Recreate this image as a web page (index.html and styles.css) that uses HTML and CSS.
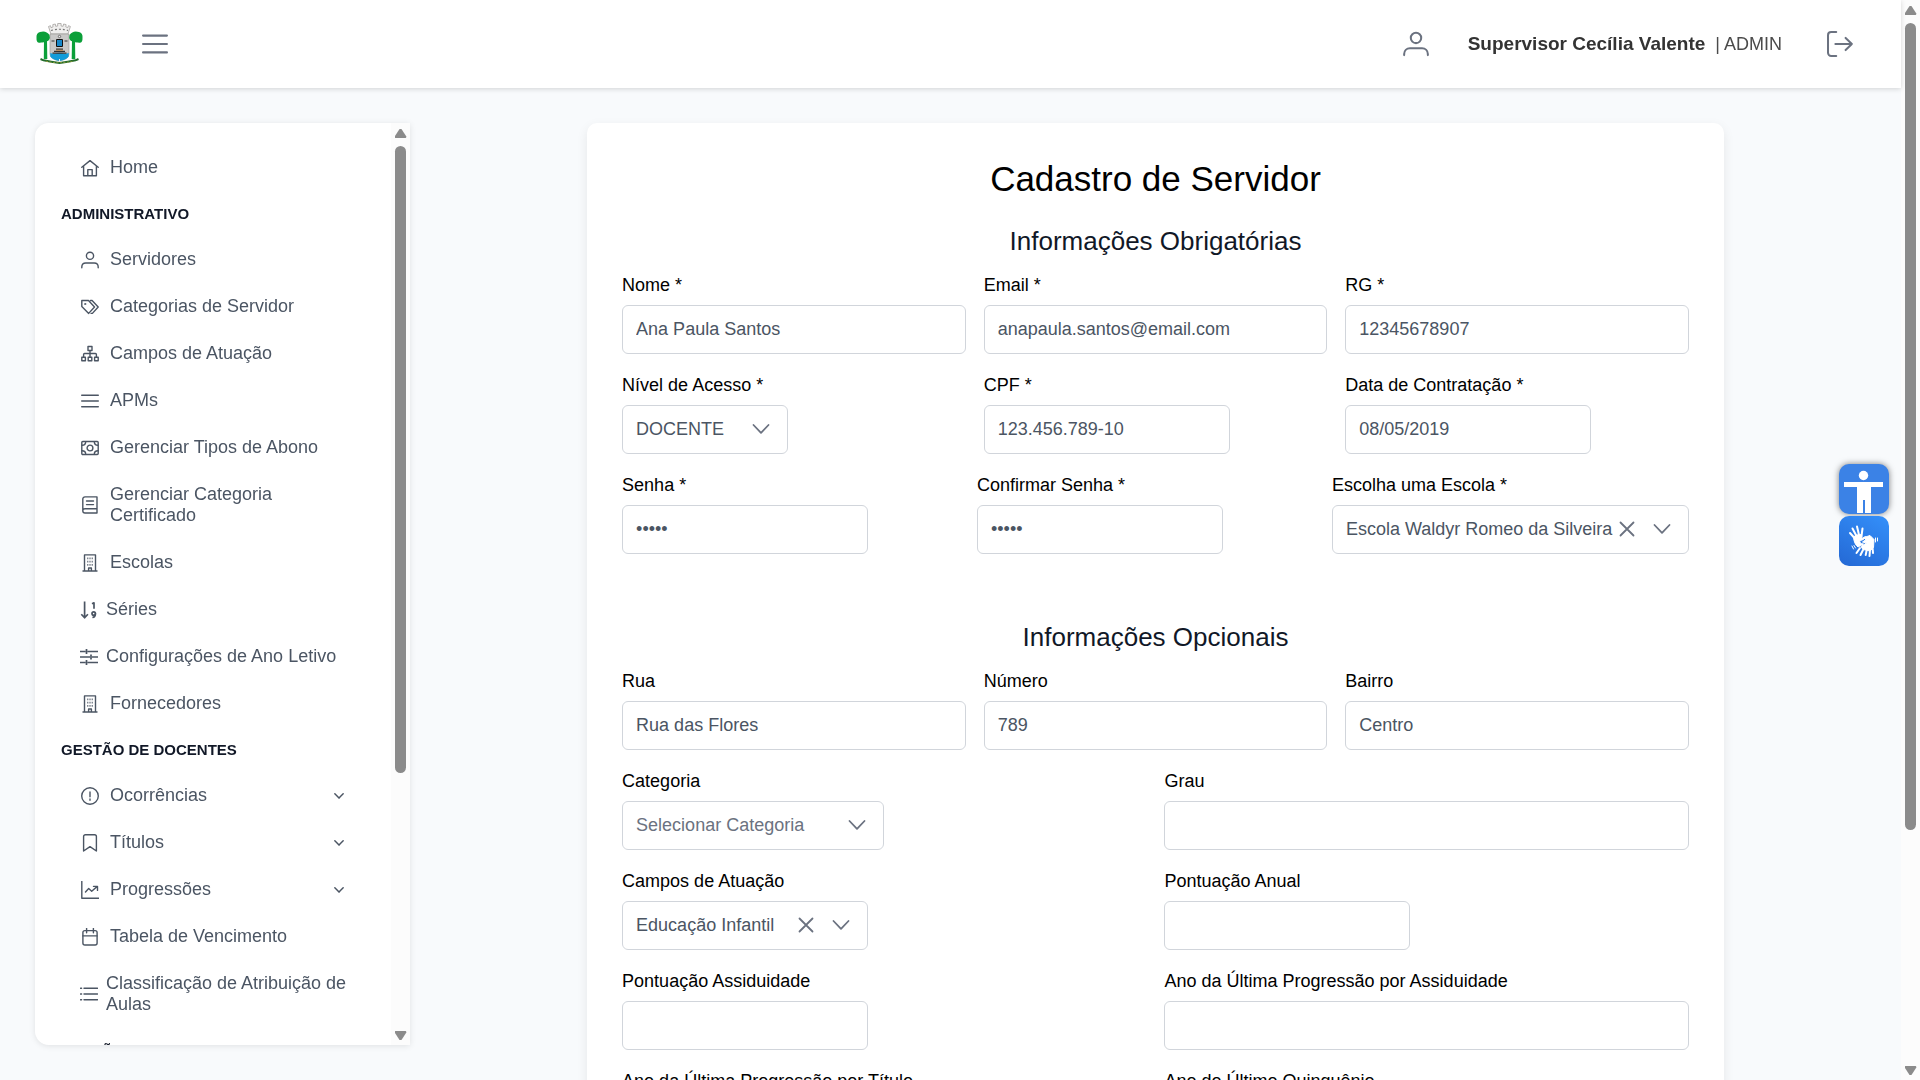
FILE: index.html
```html
<!DOCTYPE html>
<html lang="pt-BR">
<head>
<meta charset="utf-8">
<meta name="viewport" content="width=device-width, initial-scale=1">
<title>Cadastro de Servidor</title>
<link rel="stylesheet" href="styles.css">
</head>
<body>
<svg class="sprite" aria-hidden="true">
  <symbol id="i-home" viewBox="0 0 18 18"><path d="M.8 8.300 9 1.600l8.200 6.700M2.600 7v9.800h12.800V7M6.800 16.600v-6h4.400v6"/></symbol>
  <symbol id="i-user" viewBox="0 0 18 18"><circle cx="9" cy="4.800" r="3.600"/><path d="M.8 16.700v-.7c0-2.300 1.700-4 4-4h8.400c2.300 0 4 1.700 4 4v.7"/></symbol>
  <symbol id="i-tags" viewBox="0 0 18 18"><path d="M.8 2.500h6.700l6 6.500-5.800 6.400L.8 8.500zM9.500 2.500h1.600L17.200 9l-5.800 6.400h-1.300"/><circle cx="4.300" cy="6" r=".4"/></symbol>
  <symbol id="i-sitemap" viewBox="0 0 18 18"><path d="M7 1.500h4v4H7zM.8 12.200h3.600v3.600H.8zM7.200 12.200h3.600v3.600H7.200zM13.600 12.200h3.600v3.600h-3.600zM9 5.500v6.700M2.600 12.200V9.500c0-.6.400-1 1-1h10.800c.6 0 1 .4 1 1v2.700"/></symbol>
  <symbol id="i-bars" viewBox="0 0 18 18"><path d="M.7 3.200h16.600M.7 9h16.600M.7 14.800h16.600"/></symbol>
  <symbol id="i-money" viewBox="0 0 18 18"><rect x=".8" y="2.500" width="16.400" height="13" rx="1"/><circle cx="9" cy="9" r="2.900"/><path d="M1 6.200c2.500 0 3.700-1.200 3.700-3.500M17 6.200c-2.500 0-3.700-1.200-3.700-3.500M1 11.800c2.500 0 3.700 1.200 3.700 3.500M17 11.800c-2.500 0-3.700 1.200-3.700 3.500"/></symbol>
  <symbol id="i-book" viewBox="0 0 18 18"><path d="M16 12.700V.9H4C2.800.9 1.800 1.900 1.800 3v11.800c0 1.200 1 2.200 2.200 2.200h12v-4.300H4c-1.200 0-2.200.9-2.200 2M5.500 5h7M5.500 8.600h7"/></symbol>
  <symbol id="i-building" viewBox="0 0 18 18"><path d="M3.500 17V.9h11V17M2 17h14M7.600 17v-3h2.800v3"/><path class="dots" d="M6.300 4.300h1M8.500 4.300h1M10.700 4.300h1M6.300 7.600h1M8.500 7.600h1M10.700 7.600h1M6.300 10.900h1M8.500 10.900h1M10.700 10.900h1"/></symbol>
  <symbol id="i-sort" viewBox="0 0 18 18"><path class="thick" d="M4.600.5v15.800M1.300 13.200l3.300 3.600 3.300-3.600M12 2.800l2-1v6"/><circle class="thick" cx="13.700" cy="12.500" r="1.700"/><path class="thick" d="M15.400 12.500c0 2.300-.9 3.800-3 4"/></symbol>
  <symbol id="i-sliders" viewBox="0 0 18 18"><path d="M0 3.500h5.500M7.500 3.500H18M0 9h10M12 9h6M0 14.500h5.500M7.500 14.500H18M6.500 1v5M11 6.500v5M6.500 12v5" class="thick"/></symbol>
  <symbol id="i-alert" viewBox="0 0 18 18"><circle cx="9" cy="9" r="8.300"/><path d="M9 5v4.700M9 12v1.300"/></symbol>
  <symbol id="i-bookmark" viewBox="0 0 18 18"><path d="M2.600 17V2.600c0-1 .8-1.800 1.800-1.800h9.200c1 0 1.800.8 1.800 1.800V17L9 12.700z"/></symbol>
  <symbol id="i-chart" viewBox="0 0 18 18"><path d="M.8.300v16.900H18M4.500 11l3.200-3.500 3 2.700 5.600-4.800M12.500 5.400h4v4"/></symbol>
  <symbol id="i-calendar" viewBox="0 0 18 18"><rect x="1.900" y="2.600" width="14.200" height="14.400" rx="2"/><path d="M1.900 7.900h14.200M5.600.2v4.600M12.400.2v4.600"/></symbol>
  <symbol id="i-list" viewBox="0 0 18 18"><path d="M4 3.300h13.600M4 9h13.600M4 14.700h13.600M.6 3.300h1M.6 9h1M.6 14.700h1"/></symbol>
  <symbol id="i-logout" viewBox="0 0 18 18"><path d="M6.400.7H2.900C1.700.7.700 1.600.7 2.900v12.200c0 1.200 1 2.200 2.200 2.200h3.500M5.800 9h11.400M12.900 4.800 17.200 9l-4.300 4.200"/></symbol>
  <symbol id="i-down" viewBox="0 0 18 18"><path d="M1.500 5 9 12.800 16.500 5"/></symbol>
  <symbol id="i-close" viewBox="0 0 18 18"><path d="M2.500 2.500l13 13M15.500 2.500l-13 13"/></symbol>
</svg>

<div class="app">
  <header class="topbar">
    <a class="brand" href="#" aria-label="Início">
      <svg width="47" height="42" viewBox="0 0 47 42">
        <path fill="#f0efee" stroke="#a5a2a0" stroke-width=".8" d="M12.500 3.500l2-.8.500 2 2-.8-.2-2.300 2.500-.6.400 2.300 2-.3V.5h3.400V3l2 .3.500-2.300 2.500.6-.3 2.300 2 .8.600-2 2 .8-2.500 7.500h-17z"/>
        <path stroke="#777" stroke-width="1.200" stroke-dasharray="2 2" fill="none" d="M15 7.500q8.500-2.500 17 0"/>
        <path fill="#c9c8c7" stroke="#969391" stroke-width=".6" d="M14 11h19v20q0 5-9.500 7Q14 36 14 31z"/>
        <path fill="#129cd9" d="M14.300 30q3 1.500 6 .3t6 0 6.400-.3v3.500q-2 3-9.200 4.500-7.200-1.500-9.200-4.500z"/>
        <rect x="20" y="16" width="7" height="8" rx="1" fill="#111"/><rect x="21" y="17" width="5" height="6" fill="#1787c9"/>
        <circle cx="23.500" cy="13.500" r="1.200" fill="#eee" stroke="#333" stroke-width=".6"/>
        <path stroke="#333" stroke-width="1.200" d="M15.500 18h3M28.500 18h3M20 26.200h7M18 28.300h11M16.500 30.200h14"/>
        <path stroke="#c17c32" stroke-width=".7" d="M20 27.300h7"/>
        <g fill="#0b9f39">
          <path d="M.5 15Q0 10 4 9q6-2 9.500 3 1 3-.5 5-1.500 2-4 1-1 2-4 1.500Q.2 21 .5 15zM46.500 15q.5-5-3.500-6-6-2-9.500 3-1 3 .5 5 1.500 2 4 1 1 2 4 1.500 4.800 1.500 4.500-4.500z"/>
          <path d="M8 17h3l.3 19H7.800zM36 17h3l.3 19h-3.600z"/>
        </g>
        <path fill="none" stroke="#236c2b" stroke-width="2" d="M4.500 36l3 1.300Q15 39 23.500 40q8.500-1 16-2.700l3-1.300"/>
        <path fill="none" stroke="#b5a63b" stroke-width=".7" stroke-dasharray="2 1.500" d="M10 38.200q13.500 3 27 0"/>
        <path stroke="#eee" stroke-width="1" d="M23.500 36v3"/>
      </svg>
    </a>
    <button class="icon-button menu-toggle" type="button" aria-label="Menu"><svg class="icon large"><use href="#i-bars"/></svg></button>
    <div class="account">
      <button class="icon-button" type="button" aria-label="Perfil"><svg class="icon large"><use href="#i-user"/></svg></button>
      <p class="account-name"><strong>Supervisor Cecília Valente</strong><span>| ADMIN</span></p>
      <button class="icon-button" type="button" aria-label="Sair"><svg class="icon large"><use href="#i-logout"/></svg></button>
    </div>
  </header>

  <div class="layout">
    <aside class="sidebar">
      <nav class="menu">
        <a class="item" href="#"><svg class="icon"><use href="#i-home"/></svg>Home</a>
        <h2 class="menu-title">ADMINISTRATIVO</h2>
        <a class="item" href="#"><svg class="icon"><use href="#i-user"/></svg>Servidores</a>
        <a class="item" href="#"><svg class="icon"><use href="#i-tags"/></svg>Categorias de Servidor</a>
        <a class="item" href="#"><svg class="icon"><use href="#i-sitemap"/></svg>Campos de Atuação</a>
        <a class="item" href="#"><svg class="icon"><use href="#i-bars"/></svg>APMs</a>
        <a class="item" href="#"><svg class="icon"><use href="#i-money"/></svg>Gerenciar Tipos de Abono</a>
        <a class="item" href="#"><svg class="icon"><use href="#i-book"/></svg>Gerenciar Categoria Certificado</a>
        <a class="item" href="#"><svg class="icon"><use href="#i-building"/></svg>Escolas</a>
        <a class="item compact" href="#"><svg class="icon"><use href="#i-sort"/></svg>Séries</a>
        <a class="item compact" href="#"><svg class="icon"><use href="#i-sliders"/></svg>Configurações de Ano Letivo</a>
        <a class="item" href="#"><svg class="icon"><use href="#i-building"/></svg>Fornecedores</a>
        <h2 class="menu-title">GESTÃO DE DOCENTES</h2>
        <button class="item" type="button"><svg class="icon"><use href="#i-alert"/></svg>Ocorrências<svg class="icon caret"><use href="#i-down"/></svg></button>
        <button class="item" type="button"><svg class="icon"><use href="#i-bookmark"/></svg>Títulos<svg class="icon caret"><use href="#i-down"/></svg></button>
        <button class="item" type="button"><svg class="icon"><use href="#i-chart"/></svg>Progressões<svg class="icon caret"><use href="#i-down"/></svg></button>
        <a class="item" href="#"><svg class="icon"><use href="#i-calendar"/></svg>Tabela de Vencimento</a>
        <a class="item compact" href="#"><svg class="icon"><use href="#i-list"/></svg>Classificação de Atribuição de Aulas</a>
        <h2 class="menu-title">GESTÃO ESCOLAR</h2>
      </nav>
      <div class="scrollbar" aria-hidden="true"><span class="arrow up"></span><span class="track"><span class="thumb menu-thumb"></span></span><span class="arrow down"></span></div>
    </aside>

    <main class="main">
      <form class="card">
        <h1>Cadastro de Servidor</h1>
        <h2>Informações Obrigatórias</h2>
        <div class="rows">
          <div class="row thirds">
            <div class="field"><label for="nome">Nome *</label><input id="nome" type="text" value="Ana Paula Santos"></div>
            <div class="field"><label for="email">Email *</label><input id="email" type="email" value="anapaula.santos@email.com"></div>
            <div class="field"><label for="rg">RG *</label><input id="rg" type="text" value="12345678907"></div>
          </div>
          <div class="row thirds">
            <div class="field"><label for="nivel">Nível de Acesso *</label>
              <div class="select narrow"><select id="nivel"><option>DOCENTE</option></select><svg class="icon"><use href="#i-down"/></svg></div></div>
            <div class="field"><label for="cpf">CPF *</label><input class="short" id="cpf" type="text" value="123.456.789-10"></div>
            <div class="field"><label for="data">Data de Contratação *</label><input class="short" id="data" type="text" value="08/05/2019"></div>
          </div>
          <div class="row access">
            <div class="field"><label for="senha">Senha *</label><input class="short" id="senha" type="password" value="12345"></div>
            <div class="field"><label for="confirmar">Confirmar Senha *</label><input class="short" id="confirmar" type="password" value="12345"></div>
            <div class="field"><label for="escola">Escolha uma Escola *</label>
              <div class="select wide"><select id="escola"><option>Escola Waldyr Romeo da Silveira</option></select><button class="clear" type="button" aria-label="Limpar escola"><svg class="icon"><use href="#i-close"/></svg></button><svg class="icon"><use href="#i-down"/></svg></div></div>
          </div>
        </div>

        <h2 class="optional">Informações Opcionais</h2>
        <div class="rows">
          <div class="row thirds">
            <div class="field"><label for="rua">Rua</label><input id="rua" type="text" value="Rua das Flores"></div>
            <div class="field"><label for="numero">Número</label><input id="numero" type="text" value="789"></div>
            <div class="field"><label for="bairro">Bairro</label><input id="bairro" type="text" value="Centro"></div>
          </div>
          <div class="row halves">
            <div class="field"><label for="categoria">Categoria</label>
              <div class="select medium placeholder"><select id="categoria"><option>Selecionar Categoria</option></select><svg class="icon"><use href="#i-down"/></svg></div></div>
            <div class="field"><label for="grau">Grau</label><input id="grau" type="text"></div>
          </div>
          <div class="row halves">
            <div class="field"><label for="campos">Campos de Atuação</label>
              <div class="select short"><select id="campos"><option>Educação Infantil</option></select><button class="clear" type="button" aria-label="Limpar campo"><svg class="icon"><use href="#i-close"/></svg></button><svg class="icon"><use href="#i-down"/></svg></div></div>
            <div class="field"><label for="anual">Pontuação Anual</label><input class="short" id="anual" type="text"></div>
          </div>
          <div class="row halves">
            <div class="field"><label for="assiduidade">Pontuação Assiduidade</label><input class="short" id="assiduidade" type="text"></div>
            <div class="field"><label for="ano-assiduidade">Ano da Última Progressão por Assiduidade</label><input id="ano-assiduidade" type="text"></div>
          </div>
          <div class="row halves">
            <div class="field"><label for="ano-titulo">Ano da Última Progressão por Título</label><input id="ano-titulo" type="text"></div>
            <div class="field"><label for="quinquenio">Ano do Último Quinquênio</label><input id="quinquenio" type="text"></div>
          </div>
        </div>
      </form>
    </main>
  </div>
</div>

<div class="scrollbar" aria-hidden="true"><span class="arrow up"></span><span class="track"><span class="thumb page-thumb"></span></span><span class="arrow down"></span></div>

<div class="tools">
  <button class="tool accessibility" type="button" aria-label="Acessibilidade">
    <svg width="50" height="50" viewBox="0 0 50 50" fill="#fff"><circle cx="24.500" cy="11.500" r="4.700"/><path d="M5 18h39v5H32v26h-6V36h-2v13h-6V23H5z"/></svg>
  </button>
  <button class="tool libras" type="button" aria-label="Libras">
    <svg width="50" height="50" viewBox="0 0 50 50" fill="none" stroke="#fff" stroke-linecap="round" stroke-linejoin="round">
      <g stroke-width="2"><path d="M15.500 22l-4.500-5M17.500 20l-4-7.500M20 19l-2-8.500M22.500 20l1-7.500"/><path d="M21 32l-3.500 5M24 34l-2.500 5M27.500 35l-.8 4M31 34l-.5 6M33.500 31l.5 6"/></g>
      <path fill="#fff" stroke-width="1" d="M14.500 21l3-2 5-.5.500 4 3.500-2q-1.500 4-5.500 4-1 3 3.500 3.500L19 31q-4-3-4.500-10z"/>
      <path fill="#fff" stroke-width="1" d="M25 21.500l6-2 4 4-.5 8-3.500 3.500-7-1.500-2-3 5.500-3.500-4-1 3-2z"/>
      <path stroke-width="1" d="M36.500 22v4M38.500 22v3M13 30l1.500 3M15 29.500l1.500 2.500"/>
    </svg>
  </button>
</div>
</body>
</html>
```
FILE: styles.css
```css
* { box-sizing: border-box; }

body {
  margin: 0;
  height: 100vh;
  display: flex;
  overflow: hidden;
  background: #f8fafc;
  color: #4b5563;
  font-family: "Liberation Sans", Arial, sans-serif;
  font-size: 18px;
}

h1, h2, p { margin: 0; font-weight: 400; }

button, input, select { font: inherit; color: inherit; }

button { border: 0; background: none; padding: 0; cursor: pointer; }

.sprite { position: absolute; width: 0; height: 0; }

.icon {
  flex: none;
  width: 18px;
  height: 18px;
  fill: none;
  stroke: currentColor;
  stroke-width: 1.4;
  stroke-linecap: round;
  stroke-linejoin: round;
}

.icon.large { width: 26px; height: 26px; }

.dots, .thick { stroke-width: 1.7; stroke-linecap: butt; }

/* Shell */
.app {
  flex: 1;
  min-width: 0;
  display: flex;
  flex-direction: column;
}

.topbar {
  position: relative;
  z-index: 1;
  flex: none;
  height: 88px;
  padding: 0 35px 0 36px;
  display: flex;
  align-items: center;
  background: #fff;
  box-shadow: 0 1px 5px rgba(0, 0, 0, .16);
}

.brand { display: flex; }

.brand svg { display: block; }

.icon-button {
  width: 53px;
  height: 53px;
  display: grid;
  place-items: center;
  color: #6b7280;
}

.menu-toggle { margin-left: 45px; }

.account { margin-left: auto; display: flex; align-items: center; }

.account-name {
  margin: 0 31px 0 25px;
  display: flex;
  align-items: baseline;
  gap: 10px;
  color: #4b4b4b;
}

.account-name strong { font-size: 19px; color: #333; }

.layout {
  flex: 1;
  min-height: 0;
  padding: 35px 35px 0;
  display: flex;
  align-items: flex-start;
  gap: 35px;
  overflow-y: auto;
  scrollbar-width: none;
}

/* Side menu */
.sidebar {
  position: sticky;
  top: 0;
  flex: none;
  width: 375px;
  height: calc(100vh - 158px);
  display: flex;
  border-radius: 14px 0 0 14px;
  background: #fff;
  box-shadow: 0 1px 6px rgba(0, 0, 0, .1);
}

.menu { flex: 1; min-width: 0; padding: 21px 26px 0; overflow: hidden; }

.item {
  width: 100%;
  padding: 13px 12px 13px 20px;
  display: flex;
  align-items: center;
  gap: 11px;
  color: #4b5563;
  line-height: 21px;
  text-align: left;
  text-decoration: none;
}

.item.compact { padding-left: 19px; gap: 8px; }

.item .caret { width: 10px; height: 10px; margin: 0 9px 0 auto; stroke-width: 2.6; }

.menu-title {
  margin: 14px 0 13px;
  color: #111827;
  font-size: 15px;
  font-weight: 700;
  line-height: 18px;
}

/* Scrollbars */
.scrollbar {
  flex: none;
  width: 19px;
  padding: 6px 4px 5px;
  display: flex;
  flex-direction: column;
  align-items: center;
  gap: 8px;
  background: #fcfcfc;
}

.arrow { width: 12px; height: 9px; background: #8b8b8b; }

.arrow.up { clip-path: polygon(42% 0, 58% 0, 100% 85%, 94% 100%, 6% 100%, 0 85%); }

.arrow.down { clip-path: polygon(6% 0, 94% 0, 100% 15%, 58% 100%, 42% 100%, 0 15%); }

.track { flex: 1; width: 11px; }

.thumb { display: block; border-radius: 6px; background: #8b8b8b; }

.menu-thumb { height: 71.5%; }

.page-thumb { height: 78%; }

/* Form */
.main { flex: 1; min-width: 0; padding-bottom: 35px; }

.card {
  width: 80%;
  margin: 0 auto;
  padding: 35px;
  border-radius: 10px;
  background: #fff;
  box-shadow: 0 4px 12px rgba(0, 0, 0, .08);
}

.card h1 {
  color: #000;
  font-size: 35px;
  line-height: 42px;
  text-align: center;
}

.card h2 {
  margin: 26px 0 19px;
  color: #111827;
  font-size: 26px;
  line-height: 30px;
  text-align: center;
}

.card .optional { margin-top: 68px; }

.rows { display: grid; gap: 21px; }

.row { display: grid; gap: 18px; }

.thirds { grid-template-columns: repeat(3, minmax(0, 1fr)); }

.halves { grid-template-columns: repeat(2, minmax(0, 1fr)); }

.access { grid-template-columns: 1fr 1fr auto; }

.field { display: flex; flex-direction: column; gap: 10px; }

.field label { color: #000; line-height: 20px; }

.field input, .field select {
  width: 100%;
  height: 49px;
  padding: 0 13px;
  border: 1px solid #d1d5db;
  border-radius: 6px;
  background: #fff;
}

.field .short { width: 246px; }

.select { position: relative; max-width: 100%; }

.select.narrow { width: 166px; }

.select.medium { width: 262px; }

.select.wide { width: 357px; }

.select select { appearance: none; padding-bottom: 2px; }

.select.placeholder { color: #6b7280; }

.select .icon { display: block; color: #6b7280; stroke-width: 1.8; }

.select > .icon {
  position: absolute;
  top: 15px;
  right: 18px;
  pointer-events: none;
}

.clear { position: absolute; top: 15px; right: 53px; }

/* Floating tools */
.tools {
  position: fixed;
  top: 464px;
  right: 31px;
  z-index: 2;
  display: grid;
  gap: 2px;
}

.tool { width: 50px; height: 50px; border-radius: 10px; }

.tool svg { display: block; }

.accessibility { background: #3b82e6; box-shadow: 0 0 6px rgba(0, 0, 0, .5); }

.libras { position: relative; background: linear-gradient(30deg, #2468d4, #3490fa); }
```
